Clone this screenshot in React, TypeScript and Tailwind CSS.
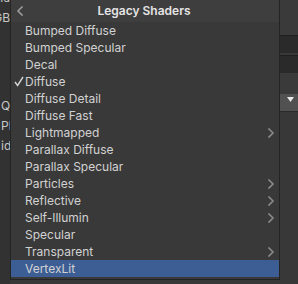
import React from "react";

type Item = { label: string; checked?: boolean; sub?: boolean; active?: boolean };

const items: Item[] = [
  { label: "Bumped Diffuse" },
  { label: "Bumped Specular" },
  { label: "Decal" },
  { label: "Diffuse", checked: true },
  { label: "Diffuse Detail" },
  { label: "Diffuse Fast" },
  { label: "Lightmapped", sub: true },
  { label: "Parallax Diffuse" },
  { label: "Parallax Specular" },
  { label: "Particles", sub: true },
  { label: "Reflective", sub: true },
  { label: "Self-Illumin", sub: true },
  { label: "Specular" },
  { label: "Transparent", sub: true },
  { label: "VertexLit", active: true },
];

const Chevron = ({ left }: { left?: boolean }) => (
  <svg width="8" height="10" viewBox="0 0 8 10" fill="none">
    <path
      d={left ? "M6 1 L2 5 L6 9" : "M2 1 L6 5 L2 9"}
      stroke={left ? "#9a9a9a" : "#8a8a8a"}
      strokeWidth="1.6"
      strokeLinecap="square"
    />
  </svg>
);

const Check = () => (
  <svg width="10" height="11" viewBox="0 0 10 11" fill="none">
    <path d="M1 6 L3.6 9.5 L9 1" stroke="#d4d4d4" strokeWidth="1.4" />
  </svg>
);

export default function App() {
  return (
    <div
      className="relative w-[298px] h-[284px] overflow-hidden bg-[#383838] text-[12px] text-[#d2d2d2]"
      style={{ fontFamily: "Inter, 'Noto Sans', sans-serif" }}
    >
      {/* inspector behind the popup */}
      <div className="flex h-full">
        <div className="w-[10px] h-full bg-[#323232] overflow-hidden text-[#c8c8c8] whitespace-nowrap">
          <div className="h-[4px] overflow-hidden flex justify-end items-end text-[11px] leading-[12px]">
            <span>Id</span>
          </div>
          <div className="mt-[6px] h-[16px] leading-[16px] flex justify-end">
            <span>RGB</span>
          </div>
          <div className="mt-[72px] h-[16px] leading-[16px] pl-[1px]">Qu</div>
          <div className="mt-[4px] h-[16px] leading-[16px] pl-[1px]">Pl</div>
          <div className="mt-[4px] h-[16px] leading-[16px] pl-[1px]">id</div>
        </div>
        <div className="flex-1" />
        <div className="w-[18px] h-full flex flex-col">
          <div className="h-[35px] bg-[#3a3a3a]" />
          <div className="h-[18px] bg-[#2a2a2a] border-t border-[#1f1f1f]" />
          <div className="h-[2px] bg-[#383838]" />
          <div className="h-[18px] bg-[#2a2a2a] border-t border-[#1f1f1f]" />
          <div className="h-[21px] bg-[#3a3a3a]" />
          <div className="h-[17px] bg-[#515151] flex justify-center pt-[3px] pl-[2px]">
            <svg width="7" height="5" viewBox="0 0 7 5">
              <path d="M0 0 H7 L3.5 5 Z" fill="#e8e8e8" />
            </svg>
          </div>
          <div className="flex-1 bg-[#383838] border-t border-[#2a2a2a]" />
        </div>
      </div>

      {/* popup menu */}
      <div className="absolute left-[10px] top-0 w-[270px] h-[280px] bg-[#393939] border border-t-0 border-[#242424] flex flex-col">
        <div className="relative h-[22px] bg-[#3e3e3e] flex items-center justify-center">
          <div className="absolute left-[5px] top-[6px]">
            <Chevron left />
          </div>
          <span className="font-semibold text-[#e4e4e4] ml-[-2px]">Legacy Shaders</span>
        </div>
        <div className="flex flex-col">
          {items.map((it) => (
            <div
              key={it.label}
              className={`h-[17px] flex items-center pl-[14px] pr-[4px] ${it.active ? "bg-[#3d5e95]" : ""}`}
            >
              <div className="w-[0px] relative">
                {it.checked && (
                  <div className="absolute -left-[11px] -top-[6px]">
                    <Check />
                  </div>
                )}
              </div>
              <span className="flex-1">{it.label}</span>
              {it.sub && <Chevron />}
            </div>
          ))}
        </div>
      </div>
    </div>
  );
}
